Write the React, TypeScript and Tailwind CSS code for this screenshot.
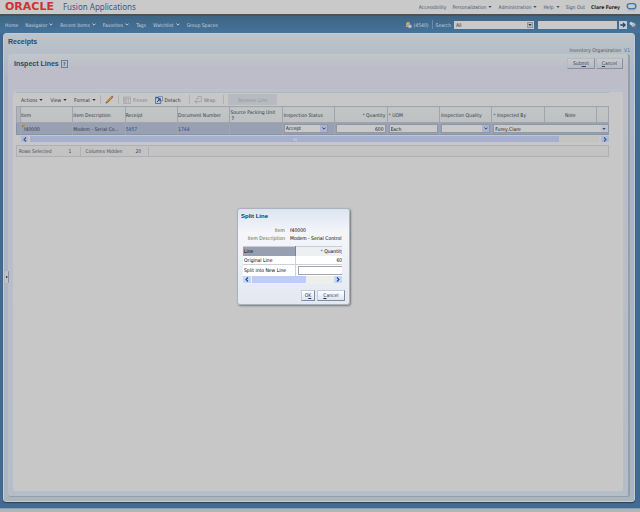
import React, { useState } from 'react';
import clsx from 'clsx';

const navItems = [
  { label: 'Home', menu: false },
  { label: 'Navigator', menu: true },
  { label: 'Recent Items', menu: true },
  { label: 'Favorites', menu: true },
  { label: 'Tags', menu: false },
  { label: 'Watchlist', menu: true },
  { label: 'Group Spaces', menu: false },
];

const globalLinks = [
  { label: 'Accessibility', menu: false },
  { label: 'Personalization', menu: true },
  { label: 'Administration', menu: true },
  { label: 'Help', menu: true },
  { label: 'Sign Out', menu: false },
];

const Caret: React.FC<{ className?: string }> = ({ className }) => (
  <svg viewBox="0 0 5 3" className={clsx('w-[4px] h-[2px] shrink-0', className)} fill="currentColor" aria-hidden="true">
    <path d="M0 0h5L2.5 3z" />
  </svg>
);

const Chevron: React.FC<{ className?: string }> = ({ className }) => (
  <svg viewBox="0 0 6 4" className={clsx('w-[4px] h-[3px] shrink-0', className)} fill="none" stroke="currentColor" strokeWidth="1.5" aria-hidden="true">
    <path d="M.7.7 3 3 5.3.7" />
  </svg>
);

const SideArrow: React.FC<{ flip?: boolean }> = ({ flip }) => (
  <svg viewBox="0 0 4 6" className="w-[4px] h-[5px]" fill="none" stroke="currentColor" strokeWidth="1.3" aria-hidden="true">
    <path d={flip ? 'M.8.6 3.2 3 .8 5.4' : 'M3.2.6.8 3l2.4 2.4'} />
  </svg>
);

const PencilIcon = () => (
  <svg viewBox="0 0 9 9" className="w-[9px] h-[9px]" aria-hidden="true">
    <path d="M1.6 7.4 7 1.8" stroke="#c48a3c" strokeWidth="2" />
    <path d="M2.2 8 7.6 2.4" stroke="#6b5330" strokeWidth=".6" />
    <path d="M6.6 1 8 2.4" stroke="#a8545a" strokeWidth="1.2" />
    <path d="M.6 8.6 1.1 6.8l1.2 1.1z" fill="#4a4a4a" />
  </svg>
);

const FreezeIcon = () => (
  <svg viewBox="0 0 8 8" className="w-[8px] h-[8px]" fill="none" stroke="#a3a5a8" aria-hidden="true">
    <path d="M.5 1h7v6.5h-7zM.5 2.8h7M3 1v6.5M5.3 1v6.5" strokeWidth=".7" />
    <path d="M1 1.2h2v6H1z" fill="#b0b2b6" stroke="none" />
  </svg>
);

const DetachIcon = () => (
  <svg viewBox="0 0 9 9" className="w-[8px] h-[8px]" aria-hidden="true">
    <path d="M.5 1.5h6v7h-6z" fill="#b9c4d4" stroke="#4a6288" strokeWidth=".9" />
    <path d="M.5 1h6v1.6h-6z" fill="#3d6396" />
    <path d="M4 .8h4.5v4.4H4z" fill="#cdd3dc" stroke="#4a6288" strokeWidth=".7" />
    <path d="M2.2 6.8 5.8 3.2M3.6 3h2.4v2.4" stroke="#1f4c86" strokeWidth="1.1" fill="none" />
  </svg>
);

const WrapIcon = () => (
  <svg viewBox="0 0 8 8" className="w-[8px] h-[8px]" fill="none" stroke="#9fa1a5" strokeWidth=".9" aria-hidden="true">
    <path d="M3.5.6h3.8v5H1M3 3.4.9 5.6 3 7.6M2.2 2.4h3" />
  </svg>
);

const BellIcon = () => (
  <svg viewBox="0 0 8 9" className="w-[7px] h-[8px]" aria-hidden="true">
    <path d="M3.6.8c-1.6 0-2 1.4-2 3 0 1.4-.6 2.2-1.2 3h5.4V3.4C5.8 1.8 5 .8 3.6.8z" fill="#c9a064" />
    <path d="M3 1.6c-.8.4-1 1.6-1 2.8" stroke="#e0cfa8" strokeWidth=".6" fill="none" />
    <circle cx="5.6" cy="6" r="2.2" fill="#b8c2cc" stroke="#76879a" strokeWidth=".4" />
  </svg>
);

const Divider: React.FC<{ className?: string }> = ({ className }) => (
  <span className={clsx('w-px h-[9px] shrink-0', className)} />
);

type PushProps = { before?: string; hotkey: string; after: string; bright?: boolean; className?: string; onClick?: () => void };

const PushButton: React.FC<PushProps> = ({ before, hotkey, after, bright, className, onClick }) => (
  <button
    type="button"
    onClick={onClick}
    className={clsx(
      'h-[11px] border text-center leading-[9px]',
      bright
        ? 'border-[#c3ccd8] border-r-[#7d8ca0] border-b-[#7d8ca0] bg-linear-to-b from-white to-[#dde4ee] text-[#16325c]'
        : 'border-[#b4b9c2] border-r-[#8a919c] border-b-[#8a919c] bg-linear-to-b from-[#c9cacd] to-[#b4b9c4] text-[#2d4468]',
      className
    )}
  >
    {before}
    <span className="underline">{hotkey}</span>
    {after}
  </button>
);

const GridSelect: React.FC<{ label: string; value?: string }> = ({ label, value = '' }) => (
  <div className="relative h-[9px] border border-[#8f98a8] bg-[#c9c9c9]">
    <select aria-label={label} defaultValue={value} className="block w-full h-[7px] appearance-none pl-px leading-[7px] text-[#222]">
      <option>{value}</option>
    </select>
    <span className="pointer-events-none absolute inset-y-0 right-0 w-[7px] flex items-center justify-center bg-[#a9b5d0] text-[#33456c]">
      <Chevron />
    </span>
  </div>
);

const TopBar = () => (
  <header className="flex items-center h-[16px] pl-[5px] pr-[3px] border-b-2 border-[#4a5258] bg-[#c9c9c9] text-[#3c5578]">
    <span className="font-['DejaVu_Sans'] text-[11px] leading-[14px] font-bold text-[#cf3036]">ORACLE</span>
    <span className="ml-[9px] font-['Noto_Sans'] text-[8px] leading-[14px] text-[#3a5b7e]">Fusion Applications</span>
    <nav className="ml-auto flex items-center gap-[6px]">
      {globalLinks.map((link) => (
        <a key={link.label} href="#" className="flex items-center gap-[2px]">
          {link.label}
          {link.menu && <Caret />}
        </a>
      ))}
      <span className="font-bold text-[#22262c]">Clare Furey</span>
      <svg viewBox="0 0 11 10" className="w-[11px] h-[10px]" fill="none" aria-hidden="true">
        <rect x="1.2" y="1.6" width="8.6" height="5.2" rx="2.6" stroke="#3f77a8" strokeWidth="1.4" />
        <path d="M1.5 8.8c2.4-.8 5.6-.8 8 0" stroke="#a4b5c4" strokeWidth=".8" />
      </svg>
    </nav>
  </header>
);

const NavBar = () => (
  <div className="flex items-center h-[17px] pl-[5px] pr-[4px] bg-linear-to-b from-[#3f6583] to-[#44739c] text-[#c3ced8]">
    <nav className="flex items-center gap-[7px]">
      {navItems.map((item) => (
        <a key={item.label} href="#" className="flex items-center gap-[2px]">
          {item.label}
          {item.menu && <Chevron />}
        </a>
      ))}
    </nav>
    <form className="ml-auto flex items-center">
      <BellIcon />
      <span className="ml-[2px]">(4540)</span>
      <Divider className="mx-[3px] bg-[#6a8cab]" />
      <label htmlFor="scope">Search</label>
      <div className="relative ml-[3px] w-[80px] h-[8px] bg-[#c9c9c9] text-[#333]">
        <select id="scope" className="block w-full h-[8px] appearance-none pl-[2px] leading-[8px]">
          <option>All</option>
        </select>
        <span className="pointer-events-none absolute right-px inset-y-px w-[6px] flex items-center justify-center bg-[#b3bac4] border border-[#8d99aa]">
          <Caret />
        </span>
      </div>
      <input aria-label="Search text" className="ml-[4px] w-[79px] h-[8px] bg-[#c9c9c9]" />
      <button type="button" aria-label="Go" className="ml-[2px] w-[8px] h-[8px] flex items-center justify-center bg-[#c3cad4] text-[#24466f]">
        <svg viewBox="0 0 6 6" className="w-[6px] h-[6px]" fill="none" stroke="currentColor" strokeWidth="1.3" aria-hidden="true">
          <path d="M.3 3h4.6M3 .9 5.1 3 3 5.1" />
        </svg>
      </button>
      <button type="button" aria-label="Advanced search" className="ml-[2px] w-[7px] h-[8px]">
        <svg viewBox="0 0 7 8" className="w-[7px] h-[8px]" aria-hidden="true">
          <circle cx="2.2" cy="2.4" r="1.7" fill="#c3ccd4" />
          <circle cx="4.4" cy="4" r="1.8" fill="#a9b9c9" stroke="#dbe0e4" strokeWidth=".5" />
          <path d="m4.6 5 2 2.2" stroke="#b5584f" strokeWidth="1.2" />
        </svg>
      </button>
    </form>
  </div>
);

const Toolbar = () => (
  <div className="flex items-center h-[14px] pl-[5px] border-t border-[#b3b8bf] text-[#2c3440]">
    <div className="flex items-center gap-[7px]">
      {['Actions', 'View', 'Format'].map((name) => (
        <button key={name} type="button" className="flex items-center gap-[2px]">
          {name}
          <Caret />
        </button>
      ))}
    </div>
    <Divider className="mx-[4px] bg-[#aeb1b6]" />
    <button type="button" aria-label="Edit"><PencilIcon /></button>
    <Divider className="mx-[4px] bg-[#aeb1b6]" />
    <button type="button" disabled className="flex items-center gap-[2px] text-[#85888d]">
      <FreezeIcon />
      Freeze
    </button>
    <button type="button" className="ml-[7px] flex items-center gap-[2px]">
      <DetachIcon />
      Detach
    </button>
    <Divider className="ml-[8px] mr-[4px] bg-[#aeb1b6]" />
    <button type="button" disabled className="flex items-center gap-[2px] text-[#70747a]">
      <WrapIcon />
      Wrap
    </button>
    <Divider className="ml-[8px] mr-[4px] bg-[#aeb1b6]" />
    <button type="button" disabled className="w-[49px] h-[11px] bg-[#b8bac2] text-[#96948e]">Remove Line</button>
  </div>
);

const cell = 'border-r border-[#a0a4ab] whitespace-nowrap';
const fieldCell = clsx(cell, 'px-px');

const LinesTable = () => (
  <table className="w-full table-fixed border-collapse text-left">
    <colgroup>
      <col className="w-[4px]" />
      {Array.from({ length: 11 }, (_, i) => <col key={i} />)}
      <col className="w-[12px]" />
    </colgroup>
    <thead>
      <tr className="h-[16px] border border-[#a0a4ab] bg-linear-to-b from-[#c0c6c5] to-[#bfc0c3] text-[#343a44] [&>th]:font-normal">
        <th className={clsx(cell, 'bg-[#b0b6c0]')} />
        <th className={cell}>Item</th>
        <th className={cell}>Item Description</th>
        <th className={cell}>Receipt</th>
        <th className={cell}>Document Number</th>
        <th className={clsx(cell, 'leading-[6px]')}>Source Packing Unit<br /><span className="pl-px font-bold text-[#3a5f92]">?</span></th>
        <th className={fieldCell}>Inspection Status</th>
        <th className={clsx(fieldCell, 'text-right')}><span className="text-[#3a5f92]">*</span> Quantity</th>
        <th className={fieldCell}><span className="text-[#3a5f92]">*</span> UOM</th>
        <th className={fieldCell}>Inspection Quality</th>
        <th className={fieldCell}><span className="text-[#3a5f92]">*</span> Inspected By</th>
        <th className={clsx(cell, 'text-center')}>Note</th>
        <th className={cell} />
      </tr>
    </thead>
    <tbody>
      <tr className="h-[12px] border-b border-l border-[#8a93a4] bg-[#98a1b3] text-[#333b47]">
        <td className={cell} />
        <td className={clsx(cell, 'relative pl-[3px]')}>
          <svg viewBox="0 0 3 3" className="absolute left-px top-[2px] w-[3px] h-[3px]" aria-hidden="true"><path d="M0 0h3L0 3z" fill="#c8792c" /></svg>
          f40000
        </td>
        <td className={cell}>Modem - Serial Co...</td>
        <td className={cell}><a href="#" className="text-[#2c4c82]">5457</a></td>
        <td className={cell}><a href="#" className="text-[#2c4c82]">1744</a></td>
        <td className={cell} />
        <td className={clsx(cell, 'pl-px pr-[6px]')}><GridSelect label="Inspection Status" value="Accept" /></td>
        <td className={fieldCell}>
          <input aria-label="Quantity" defaultValue="600" className="block w-full h-[9px] border border-[#8f98a8] bg-[#c9c9c9] px-px text-right text-[#222]" />
        </td>
        <td className={fieldCell}>
          <input aria-label="UOM" defaultValue="Each" className="block w-full h-[9px] border border-[#8f98a8] bg-[#c9c9c9] px-px text-[#222]" />
        </td>
        <td className={fieldCell}><GridSelect label="Inspection Quality" /></td>
        <td colSpan={3} className="pl-px">
          <div className="flex h-[9px] border border-[#8f98a8] bg-[#c9c9c9]">
            <input aria-label="Inspected By" defaultValue="Furey,Clare" className="min-w-0 flex-1 px-px text-[#222]" />
            <button type="button" aria-label="Choose inspector" className="w-[7px] flex items-center justify-center bg-[#bcc3cd] text-[#2f4a70]"><Caret /></button>
          </div>
        </td>
      </tr>
    </tbody>
  </table>
);

const ScrollStrip = () => (
  <div className="flex items-center gap-[2px] h-[8px] pl-[5px] text-[#3c5590]">
    <button type="button" aria-label="Scroll left" className="w-[7px] h-[6px] flex items-center justify-center bg-[#adb9d6]"><SideArrow /></button>
    <div className="flex-1 h-[6px] bg-[#c3c3c1]">
      <div className="w-[93%] h-[6px] bg-[#a5b0cf] flex items-center justify-center">
        <span className="w-[4px] h-[3px] bg-[#b4bedb]" />
      </div>
    </div>
    <button type="button" aria-label="Scroll right" className="w-[8px] h-[6px] flex items-center justify-center bg-[#adb9d6]"><SideArrow flip /></button>
  </div>
);

const SplitLineDialog: React.FC<{ onClose: () => void }> = ({ onClose }) => (
  <div
    role="dialog"
    aria-label="Split Line"
    className="absolute left-[237px] top-[208px] w-[113px] rounded-[3px] border border-[#a9b2bd] bg-linear-to-b from-[#dbe5f0] via-[#f4f6fa] via-25% to-[#e3e8f1] pb-[3px] shadow-[1px_1px_2px_rgba(0,0,0,0.4)] text-black"
  >
    <h2 className="pl-[3px] pt-[3px] font-['Liberation_Sans'] text-[6px] leading-[8px] font-bold text-[#0b3a66]">Split Line</h2>
    <dl className="mt-[6px] grid grid-cols-[47px_1fr] gap-x-[5px] whitespace-nowrap leading-[8px]">
      <dt className="text-right text-[#6b5a22]">Item</dt>
      <dd>f40000</dd>
      <dt className="text-right text-[#6b5a22]">Item Description</dt>
      <dd>Modem - Serial Control</dd>
    </dl>
    <div className="ml-[5px] mr-[7px] mt-[4px] overflow-hidden bg-white">
      <table className="w-full table-fixed border-collapse whitespace-nowrap text-left">
        <colgroup>
          <col className="w-[52px]" />
          <col />
        </colgroup>
        <thead>
          <tr className="h-[9px] border-t border-[#c9ced6]">
            <th className="border-r border-[#7a8496] bg-[#97a0b1] pl-px font-normal">Line</th>
            <th className="overflow-hidden bg-[#eeeff3] pl-[25px] font-normal"><span className="text-[#2b6bb5]">*</span> Quantity</th>
          </tr>
        </thead>
        <tbody>
          <tr className="h-[9px] border-b border-[#cdd2da]">
            <td className="border-r border-[#cdd2da] pl-px">Original Line</td>
            <td className="overflow-hidden pl-[41px]">600</td>
          </tr>
          <tr className="h-[11px]">
            <td className="border-r border-[#cdd2da] pl-px"><label htmlFor="split">Split into New Line</label></td>
            <td className="pl-[2px]">
              <input id="split" className="block w-full h-[9px] border border-r-0 border-[#a0a6b2] bg-white" />
            </td>
          </tr>
        </tbody>
      </table>
      <div className="flex gap-px h-[8px] items-center bg-[#eeeeea] text-[#23427d]">
        <button type="button" aria-label="Scroll left" className="w-[8px] h-[7px] flex items-center justify-center bg-[#c6d5fa]"><SideArrow /></button>
        <div className="flex-1 h-[7px]">
          <div className="w-8/12 h-[7px] bg-[#bdcdf8]" />
        </div>
        <button type="button" aria-label="Scroll right" className="w-[8px] h-[7px] flex items-center justify-center bg-[#c6d5fa]"><SideArrow flip /></button>
      </div>
    </div>
    <div className="mt-[6px] flex justify-end gap-[2px] pr-[4px]">
      <PushButton bright before="O" hotkey="K" after="" className="w-[14px]" onClick={onClose} />
      <PushButton bright hotkey="C" after="ancel" className="w-[28px]" onClick={onClose} />
    </div>
  </div>
);

const App: React.FC = () => {
  const [dialogOpen, setDialogOpen] = useState(true);

  return (
    <div className="relative flex min-h-screen flex-col bg-[#426a92] font-['DejaVu_Sans_Condensed','DejaVu_Sans',sans-serif] text-[5px] leading-[8px]">
      <TopBar />
      <NavBar />

      <main className="ml-[3px] mr-[5px] flex flex-1 flex-col rounded-[3px] border border-[#c3cad0] bg-linear-to-b from-[#bcc4ca] via-[#abb6c6] via-10% to-[#aab5be] px-[4px] pb-[4px] shadow-[0_1px_1px_#2c4254]">
        <h1 className="pt-[3px] h-[13px] font-['Liberation_Sans'] text-[7px] leading-[9px] font-bold text-[#2c4a68]">Receipts</h1>
        <div className="flex justify-end gap-[3px] h-[7px] leading-[7px] text-[#5e5845]">
          <span>Inventory Organization</span>
          <span className="text-[#4c6e96]">V1</span>
        </div>

        <section className="flex flex-1 flex-col rounded-[3px] border-r-2 border-b border-[#949fa9] bg-linear-to-b from-[#bfc8c6] via-[#bdbdca] via-3% to-[#b4bec8] px-[5px] pb-[5px]">
          <div className="flex items-start h-[35px] pt-[4px]">
            <h2 className="pt-px pl-px font-['Liberation_Sans'] text-[7px] leading-[9px] font-bold text-[#2c4a68]">Inspect Lines</h2>
            <button type="button" aria-label="Help" className="ml-[2px] mt-[2px] w-[7px] h-[8px] border border-[#6f7d92] text-center leading-[6px] font-bold text-[#3f5374]">?</button>
            <div className="ml-auto flex gap-px">
              <PushButton before="Sub" hotkey="m" after="it" className="w-[28px]" />
              <PushButton hotkey="C" after="ancel" className="w-[27px]" />
            </div>
          </div>

          <div className="flex-1 rounded-[2px] border-t-[3px] border-[#b9c2cb] bg-[#c7c7c7] pl-[3px] pr-[14px]">
            <Toolbar />
            <LinesTable />
            <ScrollStrip />
            <div className="mt-[2px] flex items-center h-[12px] border border-[#aeb0b4] pl-[2px] bg-[#c3c3c3] text-[#464b53]">
              <span>Rows Selected</span>
              <span className="ml-[17px]">1</span>
              <Divider className="ml-[9px] mr-[4px] bg-[#aeb1b6]" />
              <span>Columns Hidden</span>
              <span className="ml-[13px]">20</span>
              <Divider className="ml-[7px] bg-[#aeb1b6]" />
            </div>
          </div>
        </section>
      </main>

      <footer className="mt-[6px] h-[4px] border-t border-[#7fa0b8] bg-[#b4b4b4]" />

      <button type="button" aria-label="Expand panel" className="absolute left-[5px] top-[271px] w-[4px] h-[12px] rounded-[1px] bg-[#bcc2c6] flex items-center justify-center border-r border-[#8793a0] text-[#333]">
        <svg viewBox="0 0 3 4" className="w-[2px] h-[4px]" fill="currentColor" aria-hidden="true"><path d="M0 0v4l3-2z" /></svg>
      </button>

      {dialogOpen && <SplitLineDialog onClose={() => setDialogOpen(false)} />}
    </div>
  );
};

export default App;
